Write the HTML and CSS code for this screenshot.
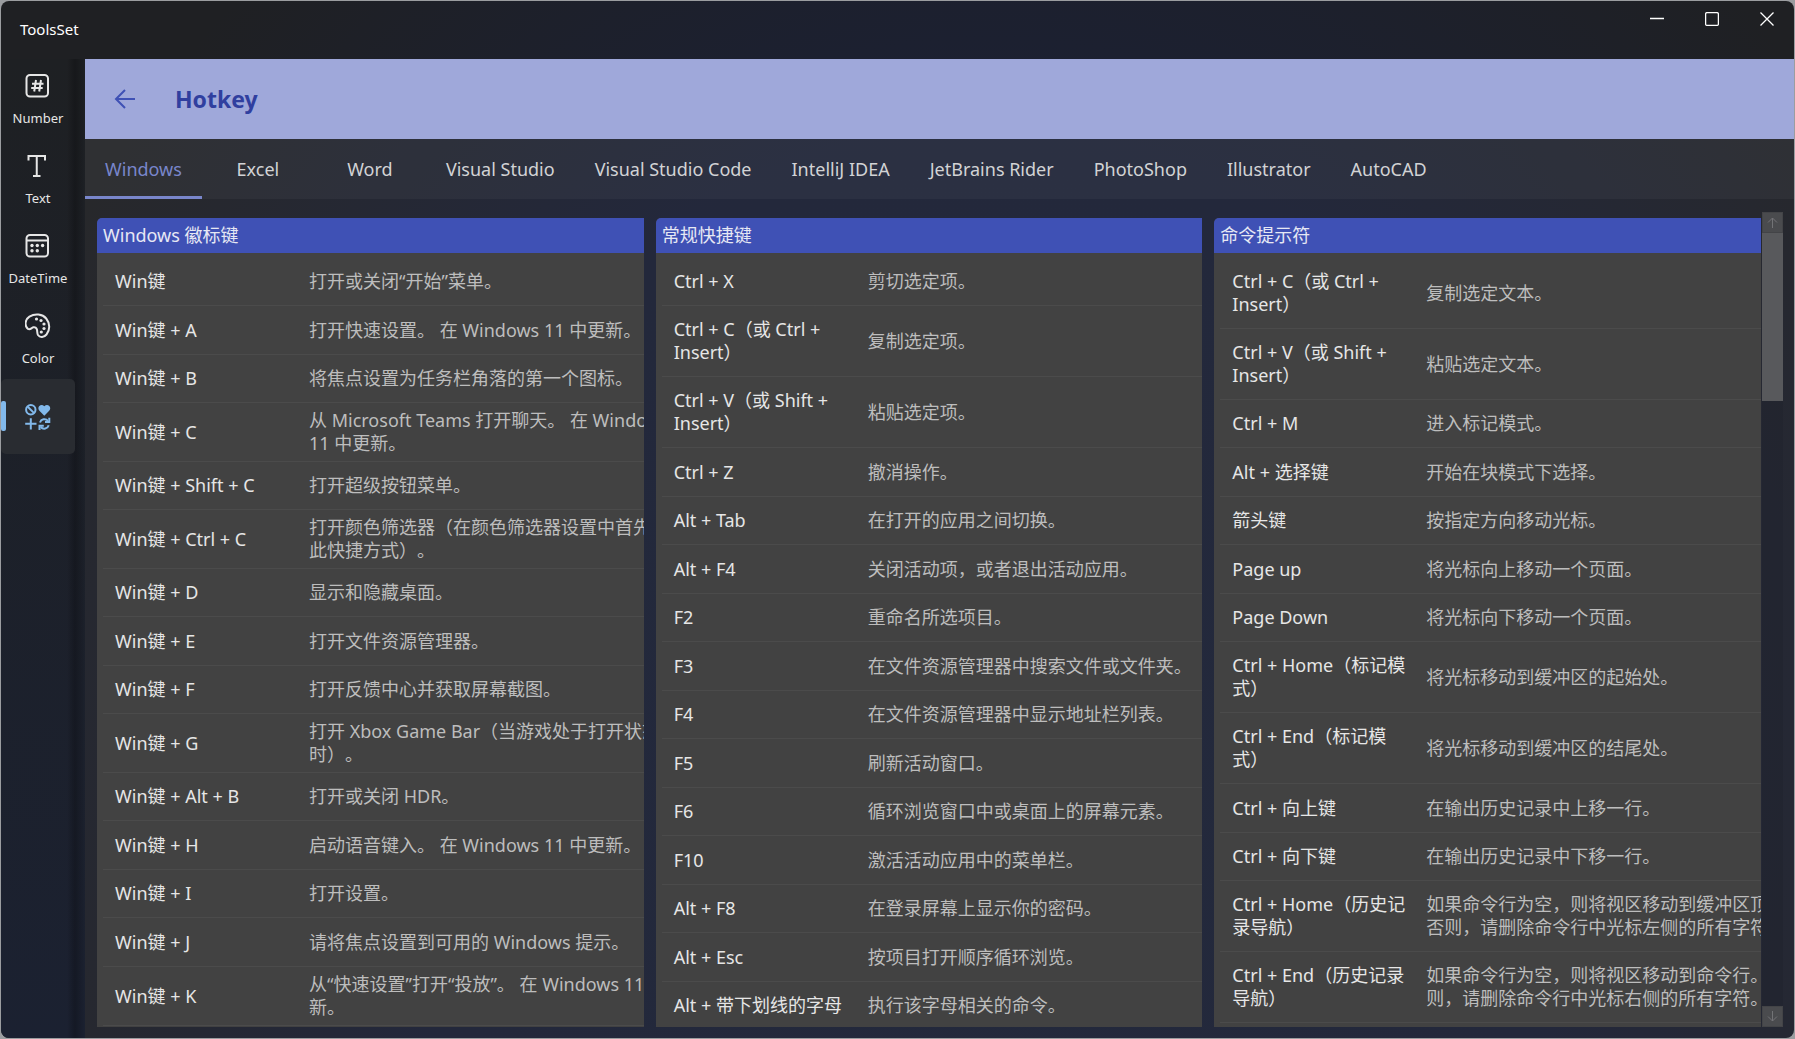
FILE: index.html
```html
<!DOCTYPE html>
<html lang="zh-CN">
<head>
<meta charset="utf-8">
<title>ToolsSet</title>
<link rel="stylesheet" href="styles.css">
</head>
<body>
<div class="window">
  <header class="titlebar">
    <span class="app-name">ToolsSet</span>
    <div class="window-buttons">
      <button type="button" aria-label="Minimize"><svg width="14" height="14" viewBox="0 0 14 14"><path d="M0 6.5h14"/></svg></button>
      <button type="button" aria-label="Maximize"><svg width="14" height="14" viewBox="0 0 14 14"><rect x=".6" y=".6" width="12.8" height="12.8" rx="1.5"/></svg></button>
      <button type="button" aria-label="Close"><svg width="14" height="14" viewBox="0 0 14 14"><path d="M.5.5l13 13M13.5.5l-13 13"/></svg></button>
    </div>
  </header>
  <div class="body">
    <nav class="sidebar">
      <a class="nav-item" href="#number">
        <svg width="26" height="26" viewBox="0 0 26 26"><rect x="1.500" y="2" width="21.500" height="21.500" rx="3.500"/><path d="M11 7l-1.800 11.500M16 7l-1.800 11.500M7 10.800h11.500M6.200 14.900h11.500"/></svg>
        <span>Number</span>
      </a>
      <a class="nav-item" href="#text">
        <svg width="26" height="26" viewBox="0 0 26 26"><path d="M3.500 7.500V3h16.500v4.500M11.750 3v20M8 23h7.500"/></svg>
        <span>Text</span>
      </a>
      <a class="nav-item" href="#datetime">
        <svg width="26" height="26" viewBox="0 0 26 26"><rect x="1.500" y="2" width="21.500" height="21.500" rx="3.500"/><path d="M1.500 7.500h21.500"/><g class="dots"><circle cx="7" cy="12.500" r="1.700"/><circle cx="12.300" cy="12.500" r="1.700"/><circle cx="17.600" cy="12.500" r="1.700"/><circle cx="7" cy="17.800" r="1.700"/><circle cx="12.300" cy="17.800" r="1.700"/></g></svg>
        <span>DateTime</span>
      </a>
      <a class="nav-item" href="#color">
        <svg width="26" height="26" viewBox="0 0 26 26"><path d="M3 16C-1 12.500.2 6.500 4.400 3.700 10 .2 17.500 1 21.200 5.500c4 5 4 11.500.3 16-2.500 3-6.500 3.500-8.500.5-1-1.800-.6-3.300-1-5.200-.4-2-2-3-3.700-2.500-2 .6-3 3-5.300 1.700z"/><g class="dots"><circle cx="11.500" cy="6" r="1.600"/><circle cx="16" cy="7.500" r="1.600"/><circle cx="19" cy="11" r="1.600"/><circle cx="19" cy="15.500" r="1.600"/><circle cx="16.300" cy="19" r="1.600"/></g></svg>
        <span>Color</span>
      </a>
      <a class="nav-item selected" href="#more" aria-label="More">
        <svg width="26" height="26" viewBox="0 0 26 26"><circle cx="5.800" cy="5.800" r="4.700"/><path d="M2.500 2.500l6.600 6.600"/><path class="fill" d="M19.300 11.800l-4.900-5C11.300 3.500 15.800-1.300 19.300 2.200c3.500-3.500 8 1.300 4.900 4.600z"/><path d="M5.800 14.200v11.300M.2 19.800h11.300"/><path d="M15 18.500c1-3.500 5.500-4.500 8-1.700M23.700 21.300c-1 3.500-5.500 4.500-8 1.700"/><path d="M24.300 13.800v4.300h-4.300M14.500 26v-4.300h4.300"/></svg>
      </a>
    </nav>
    <main class="page">
      <div class="page-header">
        <button class="back" type="button" aria-label="Back"><svg width="22" height="22" viewBox="0 0 22 22"><path d="M21 11H2M11 2l-9 9 9 9"/></svg></button>
        <h1>Hotkey</h1>
      </div>
      <div class="tabs" role="tablist">
        <button class="tab active" role="tab" aria-selected="true">Windows</button>
        <button class="tab" role="tab">Excel</button>
        <button class="tab" role="tab">Word</button>
        <button class="tab" role="tab">Visual Studio</button>
        <button class="tab" role="tab">Visual Studio Code</button>
        <button class="tab" role="tab">IntelliJ IDEA</button>
        <button class="tab" role="tab">JetBrains Rider</button>
        <button class="tab" role="tab">PhotoShop</button>
        <button class="tab" role="tab">Illustrator</button>
        <button class="tab" role="tab">AutoCAD</button>
      </div>
      <div class="content">
        <div class="cards">
          <section class="card">
            <h2>Windows 徽标键</h2>
            <table>
              <tr><th scope="row">Win键</th><td>打开或关闭“开始”菜单。</td></tr>
              <tr><th scope="row">Win键 + A</th><td>打开快速设置。 在 Windows 11 中更新。</td></tr>
              <tr><th scope="row">Win键 + B</th><td>将焦点设置为任务栏角落的第一个图标。</td></tr>
              <tr><th scope="row">Win键 + C</th><td>从 Microsoft Teams 打开聊天。 在 Windows<br>11 中更新。</td></tr>
              <tr><th scope="row">Win键 + Shift + C</th><td>打开超级按钮菜单。</td></tr>
              <tr><th scope="row">Win键 + Ctrl + C</th><td>打开颜色筛选器（在颜色筛选器设置中首先启用<br>此快捷方式）。</td></tr>
              <tr><th scope="row">Win键 + D</th><td>显示和隐藏桌面。</td></tr>
              <tr><th scope="row">Win键 + E</th><td>打开文件资源管理器。</td></tr>
              <tr><th scope="row">Win键 + F</th><td>打开反馈中心并获取屏幕截图。</td></tr>
              <tr><th scope="row">Win键 + G</th><td>打开 Xbox Game Bar（当游戏处于打开状态<br>时）。</td></tr>
              <tr><th scope="row">Win键 + Alt + B</th><td>打开或关闭 HDR。</td></tr>
              <tr><th scope="row">Win键 + H</th><td>启动语音键入。 在 Windows 11 中更新。</td></tr>
              <tr><th scope="row">Win键 + I</th><td>打开设置。</td></tr>
              <tr><th scope="row">Win键 + J</th><td>请将焦点设置到可用的 Windows 提示。</td></tr>
              <tr><th scope="row">Win键 + K</th><td>从“快速设置”打开“投放”。 在 Windows 11<br>新。</td></tr>
            </table>
          </section>
          <section class="card">
            <h2>常规快捷键</h2>
            <table>
              <tr><th scope="row">Ctrl + X</th><td>剪切选定项。</td></tr>
              <tr><th scope="row">Ctrl + C（或 Ctrl +<br>Insert）</th><td>复制选定项。</td></tr>
              <tr><th scope="row">Ctrl + V（或 Shift +<br>Insert）</th><td>粘贴选定项。</td></tr>
              <tr><th scope="row">Ctrl + Z</th><td>撤消操作。</td></tr>
              <tr><th scope="row">Alt + Tab</th><td>在打开的应用之间切换。</td></tr>
              <tr><th scope="row">Alt + F4</th><td>关闭活动项，或者退出活动应用。</td></tr>
              <tr><th scope="row">F2</th><td>重命名所选项目。</td></tr>
              <tr><th scope="row">F3</th><td>在文件资源管理器中搜索文件或文件夹。</td></tr>
              <tr><th scope="row">F4</th><td>在文件资源管理器中显示地址栏列表。</td></tr>
              <tr><th scope="row">F5</th><td>刷新活动窗口。</td></tr>
              <tr><th scope="row">F6</th><td>循环浏览窗口中或桌面上的屏幕元素。</td></tr>
              <tr><th scope="row">F10</th><td>激活活动应用中的菜单栏。</td></tr>
              <tr><th scope="row">Alt + F8</th><td>在登录屏幕上显示你的密码。</td></tr>
              <tr><th scope="row">Alt + Esc</th><td>按项目打开顺序循环浏览。</td></tr>
              <tr><th scope="row">Alt + 带下划线的字母</th><td>执行该字母相关的命令。</td></tr>
            </table>
          </section>
          <section class="card">
            <h2>命令提示符</h2>
            <table>
              <tr><th scope="row">Ctrl + C（或 Ctrl +<br>Insert）</th><td>复制选定文本。</td></tr>
              <tr><th scope="row">Ctrl + V（或 Shift +<br>Insert）</th><td>粘贴选定文本。</td></tr>
              <tr><th scope="row">Ctrl + M</th><td>进入标记模式。</td></tr>
              <tr><th scope="row">Alt + 选择键</th><td>开始在块模式下选择。</td></tr>
              <tr><th scope="row">箭头键</th><td>按指定方向移动光标。</td></tr>
              <tr><th scope="row">Page up</th><td>将光标向上移动一个页面。</td></tr>
              <tr><th scope="row">Page Down</th><td>将光标向下移动一个页面。</td></tr>
              <tr><th scope="row">Ctrl + Home（标记模<br>式）</th><td>将光标移动到缓冲区的起始处。</td></tr>
              <tr><th scope="row">Ctrl + End（标记模<br>式）</th><td>将光标移动到缓冲区的结尾处。</td></tr>
              <tr><th scope="row">Ctrl + 向上键</th><td>在输出历史记录中上移一行。</td></tr>
              <tr><th scope="row">Ctrl + 向下键</th><td>在输出历史记录中下移一行。</td></tr>
              <tr><th scope="row">Ctrl + Home（历史记<br>录导航）</th><td>如果命令行为空，则将视区移动到缓冲区顶<br>否则，请删除命令行中光标左侧的所有字符。</td></tr>
              <tr><th scope="row">Ctrl + End（历史记录<br>导航）</th><td>如果命令行为空，则将视区移动到命令行。<br>则，请删除命令行中光标右侧的所有字符。</td></tr>
            </table>
          </section>
        </div>
        <div class="scrollbar">
          <button type="button" aria-label="Scroll up"><svg width="11" height="11" viewBox="0 0 11 11"><path d="M5.500 11V1M1 5.500l4.500-4.500 4.500 4.500"/></svg></button>
          <div class="track"><div class="thumb"></div></div>
          <button type="button" aria-label="Scroll down"><svg width="11" height="11" viewBox="0 0 11 11"><path d="M5.500 0v10M1 5.500l4.500 4.500 4.500-4.500"/></svg></button>
        </div>
      </div>
    </main>
  </div>
</div>
</body>
</html>
```
FILE: styles.css
```css
* { box-sizing: border-box; }
html, body { height: 100%; }
body {
  margin: 0;
  padding: 1px;
  background: #9b9da0;
  font-family: "Noto Sans", "Noto Sans CJK SC", sans-serif;
  text-spacing-trim: space-all;
  overflow: hidden;
}
button { margin: 0; padding: 0; border: 0; background: none; color: inherit; font: inherit; }
svg { display: block; fill: none; stroke: currentColor; stroke-width: 2; }

.window {
  display: flex;
  flex-direction: column;
  height: 100%;
  border-radius: 8px;
  overflow: hidden;
  color: #fff;
  background: radial-gradient(ellipse 65% 120% at 55% 75%, #1b2135 0%, #1b2034 50%, #1f2023 90%);
}

.titlebar { display: flex; justify-content: space-between; height: 58px; flex: none; }
.app-name { padding: 17px 19px; font-size: 15px; line-height: 22px; }
.window-buttons { display: flex; height: 36px; }
.window-buttons button { display: grid; place-items: center; width: 55px; }
.window-buttons svg { stroke-width: 1.3; }

.body { display: flex; flex: 1; min-height: 0; }
.sidebar {
  display: flex;
  flex-direction: column;
  gap: 5px;
  flex: none;
  width: 84px;
  padding-right: 10px;
  background:
    linear-gradient(to right, transparent 66px, rgba(0, 0, 0, .25) 74px, transparent 84px),
    linear-gradient(#1e2023, #1b2131);
}
.nav-item {
  display: flex;
  flex-direction: column;
  align-items: center;
  gap: 7px;
  height: 75px;
  padding-top: 14px;
  color: #e6e6e6;
  font-size: 13px;
  line-height: 24px;
  text-decoration: none;
}
.nav-item .dots, .nav-item .fill { fill: currentColor; stroke: none; }
.nav-item.selected {
  position: relative;
  justify-content: center;
  padding: 0;
  border-radius: 5px;
  background: #292c31;
  color: #82b9eb;
}
.nav-item.selected::before {
  content: "";
  position: absolute;
  left: 0;
  top: 22px;
  width: 5px;
  height: 30px;
  border-radius: 2px;
  background: #82b9eb;
}

.page {
  display: flex;
  flex-direction: column;
  flex: 1;
  min-width: 0;
  background: rgba(255, 255, 255, .04);
}
.page-header {
  display: flex;
  align-items: center;
  gap: 39px;
  flex: none;
  height: 80px;
  padding-left: 29px;
  background: #9fa8da;
  color: #303f9f;
}
.page-header h1 { margin: 0; font-size: 23px; line-height: 32px; font-weight: 700; }
.back { color: #3f51b5; }

.tabs { display: flex; flex: none; height: 60px; background: rgba(255, 255, 255, .04); }
.tab {
  min-width: 112px;
  padding: 3px 20px 0;
  border-bottom: 3px solid transparent;
  color: #d2d3d5;
  font-size: 18px;
  line-height: 26px;
  white-space: nowrap;
}
.tab.active { color: #7986cb; border-color: #7986cb; }

.content { display: flex; flex: 1; min-height: 0; padding: 13px 11px 11px 12px; }
.cards {
  display: grid;
  grid-template-columns: repeat(3, minmax(0, 1fr));
  grid-template-rows: minmax(0, 1fr);
  gap: 12px;
  flex: 1;
  min-width: 0;
  padding: 6px 1px 0 0;
}
.card { overflow: hidden; border-radius: 5px 0 0 0; background: #424242; }
.card h2 {
  margin: 0;
  padding: 4px 6px 5px;
  background: #3f51b5;
  color: #e6e8f4;
  font-size: 18px;
  line-height: 26px;
  font-weight: 400;
}
.card table {
  width: calc(100% - 6px);
  margin: 5px 0 0 6px;
  border-collapse: separate;
  border-spacing: 0;
  table-layout: fixed;
  font-size: 18px;
  line-height: 23px;
  white-space: nowrap;
}
.card th, .card td { border-bottom: 1px solid #4b4b4b; vertical-align: middle; }
.card th { width: 206px; padding: 12px; color: #e6e6e6; font-weight: 400; text-align: left; }
.card td { padding: 6px 0; color: #bdbdbd; }
.card tr:nth-child(2n) { height: 49px; }

.scrollbar { display: flex; flex-direction: column; width: 21px; flex: none; }
.scrollbar button { display: grid; place-items: center; height: 21px; background: #4a4b4e; color: #727376; border: 1px solid #434447; }
.scrollbar svg { stroke-width: 1; }
.track { flex: 1; background: rgba(0, 0, 0, .06); }
.thumb { height: 168px; background: #58595c; }
```
